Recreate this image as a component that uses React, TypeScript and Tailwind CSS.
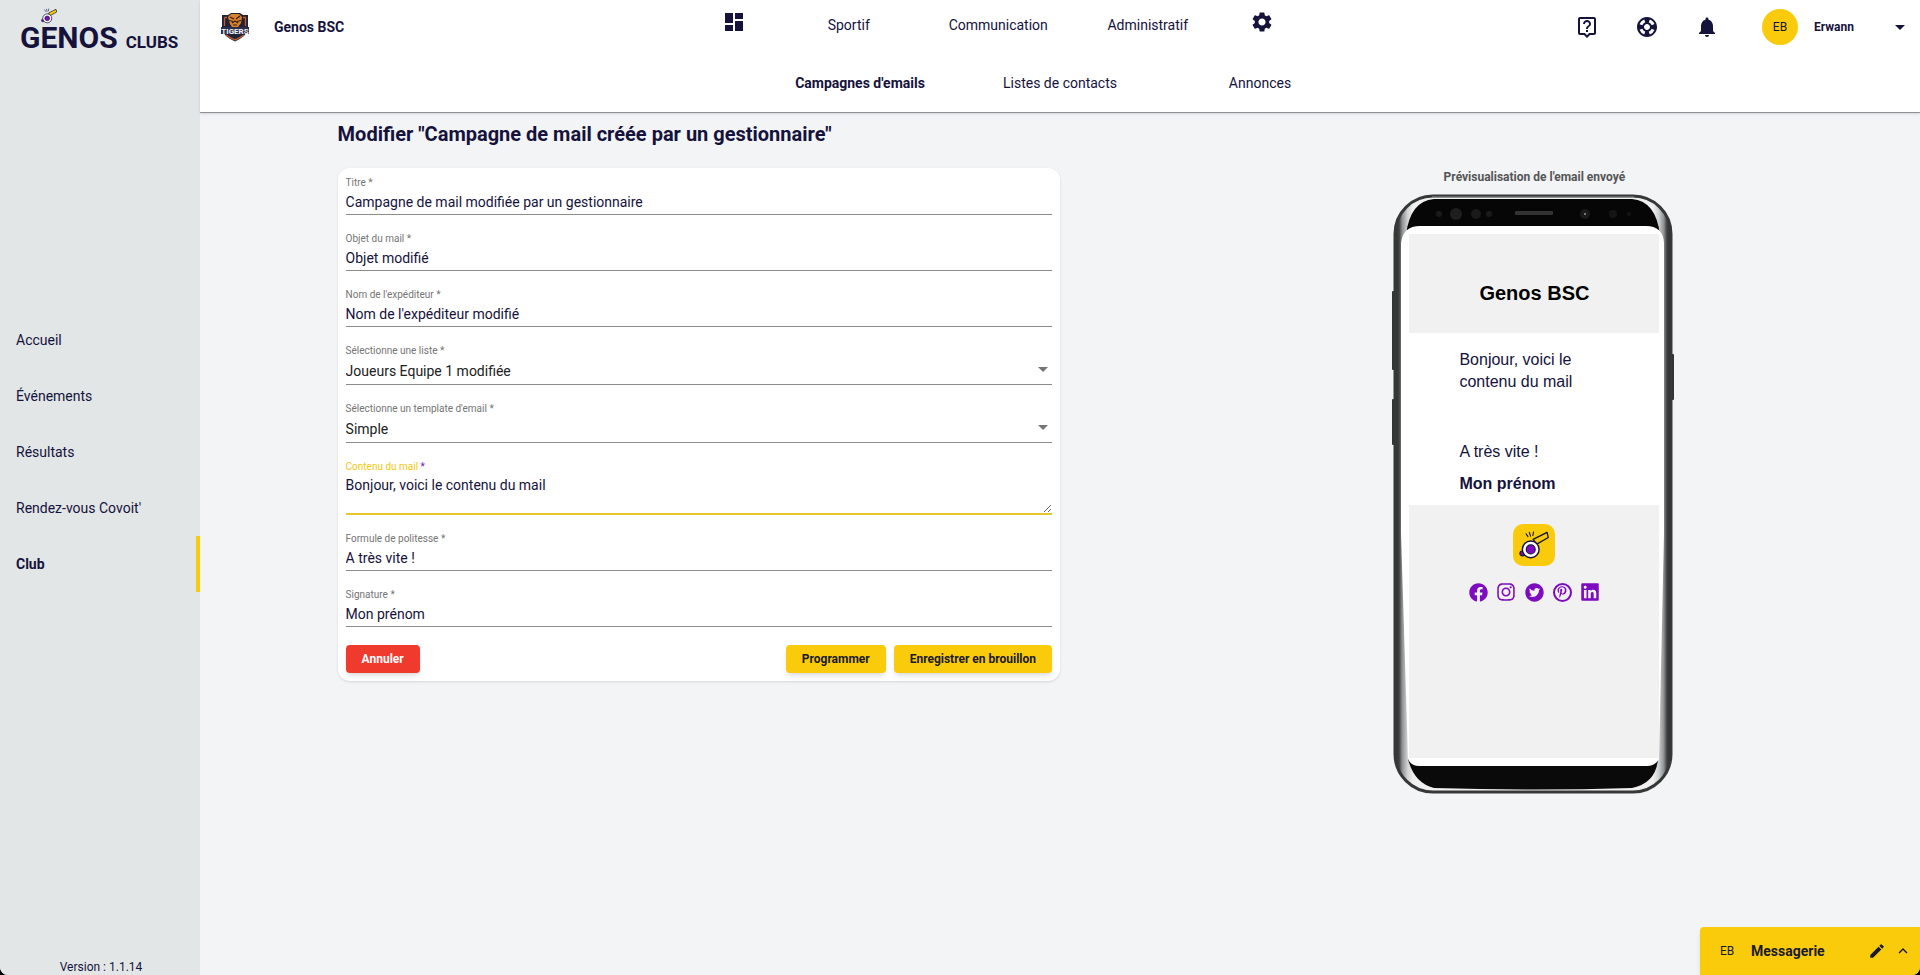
import React from "react";
import { AiFillTwitterCircle } from "react-icons/ai";
import { FaFacebook, FaInstagram, FaLinkedin, FaPinterestP } from "react-icons/fa";
import {
  MdArrowDropDown,
  MdDashboard,
  MdEdit,
  MdExpandLess,
  MdNotifications,
  MdOutlineLiveHelp,
  MdOutlineSupport,
  MdSettings,
} from "react-icons/md";

const sideLinks = ["Accueil", "Événements", "Résultats", "Rendez-vous Covoit'", "Club"];
const sectionLinks = ["Sportif", "Communication", "Administratif"];
const subLinks = ["Campagnes d'emails", "Listes de contacts", "Annonces"];

const Whistle = ({ className }: { className?: string }) => (
  <svg viewBox="0 0 32 30" className={className} aria-hidden="true">
    <path d="M15 9 L30 1.500 L31.300 7 L19 14 Z" fill="#f9cb0a" stroke="#15123b" strokeWidth="1.400" strokeLinejoin="round" />
    <path d="M7.500 3 L9.500 6 M11 1.500 L12.300 5.500 M15.500 1 L14.800 4.800" stroke="#15123b" strokeWidth="1.200" strokeLinecap="round" />
    <circle cx="3.500" cy="24" r="2.600" fill="#7d0bc0" stroke="#15123b" strokeWidth="1.200" />
    <circle cx="12.500" cy="19.700" r="9" fill="#fff" stroke="#15123b" strokeWidth="1.500" />
    <circle cx="12.500" cy="19.700" r="4.800" fill="#7d0bc0" stroke="#15123b" strokeWidth="1.200" />
  </svg>
);

const TeamCrest = () => (
  <svg viewBox="0 0 30 30" className="size-[30px]" role="img" aria-label="Tigers">
    <path d="M2 3 H8 L11 1 H20 L23 3 H28 V17 Q27 24 15 29.500 Q3 24 2 17 Z" fill="#1d2438" />
    <path d="M4.500 5.500 H7 M23 5.500 H25.500 V14 M4.500 5.500 V14 M6 23 Q9 25.500 15 27.800 Q21 25.500 24 23" fill="none" stroke="#c65a2c" strokeWidth="1.300" />
    <path d="M8 5 L11 2 L19 2 L22 5 L21 11 L18 15 H12 L10 12 Z" fill="#d9822b" />
    <path d="M10 5 L14 7 M20 4 L16 7 M9 8.500 L13 9.500 M21 8.500 L17 9.500 M13 13 H17 M12 11 L15 9 L18 11" fill="none" stroke="#3a2118" strokeWidth="1.200" />
    <rect x="1" y="15" width="28" height="7" fill="#2a3048" />
    <text x="15" y="21.500" textAnchor="middle" fontSize="8" fontWeight="700" fill="#f1f1f5" className="font-['Roboto',sans-serif]">
      TIGERS
    </text>
  </svg>
);

const Sidebar = () => (
  <aside className="flex w-[200px] shrink-0 flex-col bg-[#e2e6e7]">
    <a href="#" className="flex h-14 flex-col px-5 pt-2" aria-label="Genos Clubs">
      <Whistle className="ml-[21px] h-4 w-4 shrink-0" />
      <span className="flex items-baseline gap-2 leading-7 font-bold text-[#15123b]">
        <span className="text-[30px]">GENOS</span>
        <span className="text-[17px]">CLUBS</span>
      </span>
    </a>
    <nav className="mt-64 flex flex-col">
      {sideLinks.map((label) => (
        <a
          key={label}
          href="#"
          className={
            label === "Club"
              ? "flex h-14 items-center border-r-4 border-[#f9cb0a] pl-4 font-bold"
              : "flex h-14 items-center pl-4"
          }
        >
          {label}
        </a>
      ))}
    </nav>
    <p className="mt-auto pl-0.5 text-center text-xs">Version : 1.1.14</p>
  </aside>
);

const Header = () => (
  <header className="border-b border-[#8f9196] bg-white shadow-sm">
    <div className="grid h-[54px] grid-cols-[4fr_608px_5fr]">
      <div className="flex items-center gap-6 pl-5">
        <TeamCrest />
        <span className="font-bold">Genos BSC</span>
      </div>
      <nav className="flex">
        <a href="#" aria-label="Tableau de bord" className="flex h-11 w-20 items-center justify-center">
          <MdDashboard className="size-6" />
        </a>
        {sectionLinks.map((label) => (
          <a key={label} href="#" className="flex h-[50px] w-[150px] items-center justify-center">
            {label}
          </a>
        ))}
        <a href="#" aria-label="Paramètres" className="flex h-11 w-20 items-center justify-center">
          <MdSettings className="size-6" />
        </a>
      </nav>
      <div className="flex items-center justify-end pr-2">
        <div className="mr-[43px] flex gap-9">
          <button type="button" aria-label="Aide">
            <MdOutlineLiveHelp className="size-6" />
          </button>
          <button type="button" aria-label="Support">
            <MdOutlineSupport className="size-6" />
          </button>
          <button type="button" aria-label="Notifications">
            <MdNotifications className="size-6" />
          </button>
        </div>
        <span className="mr-4 flex size-9 items-center justify-center rounded-full bg-[#f9cb0a] text-xs">EB</span>
        <button type="button" className="flex w-[98px] items-center justify-between text-xs font-bold">
          Erwann
          <MdArrowDropDown className="size-6" />
        </button>
      </div>
    </div>
    <nav className="flex h-[58px] items-center justify-center">
      {subLinks.map((label) => (
        <a
          key={label}
          href="#"
          className={label === "Campagnes d'emails" ? "w-[200px] text-center font-bold" : "w-[200px] text-center"}
        >
          {label}
        </a>
      ))}
    </nav>
  </header>
);

type FieldProps = { id: string; label: string; value: string };

const labelClass = "block text-[10px] leading-4 text-[#757575]";

const TextField = ({ id, label, value }: FieldProps) => (
  <div className="border-b border-[#8c8c8c] pb-0.5">
    <label htmlFor={id} className={labelClass}>
      {label} *
    </label>
    <input id={id} type="text" required defaultValue={value} className="block h-[21px] w-full outline-none" />
  </div>
);

const SelectField = ({ id, label, value }: FieldProps) => (
  <div className="border-b border-[#8c8c8c] pb-0.5">
    <label htmlFor={id} className={labelClass}>
      {label} *
    </label>
    <div className="relative text-[#212121]">
      <select id={id} required defaultValue={value} className="block h-[23px] w-full appearance-none outline-none">
        <option>{value}</option>
      </select>
      <svg viewBox="0 0 10 5" className="pointer-events-none absolute top-2 right-1 h-[5px] w-2.5 fill-[#757575]" aria-hidden="true">
        <path d="M0 0 H10 L5 5 Z" />
      </svg>
    </div>
  </div>
);

const CampaignForm = () => (
  <form className="flex w-1/2 flex-col gap-4 rounded-xl bg-white px-2 pt-[7px] pb-2 shadow-sm">
    <TextField id="titre" label="Titre" value="Campagne de mail modifiée par un gestionnaire" />
    <TextField id="objet" label="Objet du mail" value="Objet modifié" />
    <TextField id="expediteur" label="Nom de l'expéditeur" value="Nom de l'expéditeur modifié" />
    <SelectField id="liste" label="Sélectionne une liste" value="Joueurs Equipe 1 modifiée" />
    <SelectField id="template" label="Sélectionne un template d'email" value="Simple" />
    <div className="border-b-2 border-[#e6c62f]">
      <label htmlFor="contenu" className="block text-[10px] leading-4 text-[#f2c80f]">
        Contenu du mail <span className="text-[#7d0bc0]">*</span>
      </label>
      <textarea
        id="contenu"
        required
        defaultValue="Bonjour, voici le contenu du mail"
        className="block h-[38px] w-full resize-y outline-none"
      />
    </div>
    <TextField id="politesse" label="Formule de politesse" value="A très vite !" />
    <TextField id="signature" label="Signature" value="Mon prénom" />
    <div className="mt-0.5 flex gap-2 text-xs font-bold">
      <button type="button" className="mr-auto h-7 rounded bg-[#ef3a2d] px-4 text-white shadow-md">
        Annuler
      </button>
      <button type="button" className="h-7 rounded bg-[#f9cb0a] px-4 text-[#1a1a2e] shadow-md">
        Programmer
      </button>
      <button type="submit" className="h-7 rounded bg-[#f9cb0a] px-4 text-[#1a1a2e] shadow-md">
        Enregistrer en brouillon
      </button>
    </div>
  </form>
);

const PhoneFrame = () => (
  <svg viewBox="0 0 284 602" className="absolute inset-0 h-full w-full" aria-hidden="true">
    <defs>
      <linearGradient id="edge" x1="0" x2="1" y1="0" y2="0">
        <stop offset="0" stopColor="#2b2c2c" />
        <stop offset="0.015" stopColor="#3f4141" />
        <stop offset="0.026" stopColor="#8e9091" />
        <stop offset="0.045" stopColor="#cfd1d2" />
        <stop offset="0.065" stopColor="#f0f0f0" />
        <stop offset="0.935" stopColor="#f0f0f0" />
        <stop offset="0.955" stopColor="#cfd1d2" />
        <stop offset="0.974" stopColor="#8e9091" />
        <stop offset="0.985" stopColor="#3f4141" />
        <stop offset="1" stopColor="#2b2c2c" />
      </linearGradient>
    </defs>
    <rect x="0" y="98" width="4" height="79" rx="1" fill="#333" />
    <rect x="0" y="206" width="4" height="46" rx="1" fill="#333" />
    <rect x="278" y="161" width="4" height="46" rx="1" fill="#333" />
    <rect x="3" y="3" width="276" height="596" rx="38" fill="url(#edge)" stroke="#363838" strokeWidth="3" />
    <path d="M40 4 H242" stroke="#8b8d8e" strokeWidth="1" />
    <path d="M42 6 H240 Q264 8 268 42 H14 Q18 8 42 6 Z" fill="#060606" />
    <path d="M16 566 H266 Q264 590 240 595 Q141 598 42 595 Q22 590 16 566 Z" fill="#0a0a0a" />
    <path d="M9 50 Q11 33 28 33 H254 Q271 33 272 50 V340 L267 566 Q263 573 255 573 H27 Q19 573 16 566 L9 340 Z" fill="#fff" />
    <rect x="123" y="18" width="38" height="4" rx="1" fill="#333" />
    <circle cx="47" cy="21" r="3" fill="#1a1a1a" />
    <circle cx="64" cy="21" r="6" fill="#1f1f1f" />
    <circle cx="84" cy="21" r="5" fill="#1a1a1a" />
    <circle cx="97" cy="21" r="3" fill="#1a1a1a" />
    <circle cx="193" cy="21" r="5" fill="#1a1a1a" />
    <circle cx="193" cy="21" r="1" fill="#999" />
    <circle cx="221" cy="21" r="4" fill="#151515" />
    <circle cx="237" cy="21" r="2" fill="#151515" />
  </svg>
);

const EmailPreview = () => (
  <section className="flex w-[496px] flex-col items-center">
    <h2 className="text-xs leading-[18px] font-bold text-[#555]">Prévisualisation de l'email envoyé</h2>
    <div className="relative mt-[7px] h-[602px] w-[284px] px-[17px] pt-[41px]">
      <PhoneFrame />
      <article className="relative flex h-[524px] flex-col font-['Liberation_Sans',Arial,sans-serif] text-base">
        <div className="flex h-[99px] items-center justify-center bg-[#f1f1f1] pt-[18px] text-xl font-bold text-black">
          Genos BSC
        </div>
        <div className="px-[50px] pt-4 leading-[22px]">
          <p>Bonjour, voici le contenu du mail</p>
          <p className="mt-12">A très vite !</p>
          <p className="mt-2.5 font-bold">Mon prénom</p>
        </div>
        <div className="mt-2.5 flex flex-1 flex-col items-center bg-[#f1f1f1] pt-[19px]">
          <div className="flex size-[42px] items-center justify-center rounded-[10px] bg-[#f9cb0a]">
            <Whistle className="h-7 w-[30px]" />
          </div>
          <div className="mt-4 flex gap-2 text-[#7d0bc0]">
            <a href="#" aria-label="Facebook" className="flex size-5 items-center justify-center">
              <FaFacebook className="size-[19px]" />
            </a>
            <a href="#" aria-label="Instagram" className="flex size-5 items-center justify-center">
              <FaInstagram className="size-5" />
            </a>
            <a href="#" aria-label="Twitter" className="flex size-5 items-center justify-center">
              <AiFillTwitterCircle className="size-[21px] shrink-0" />
            </a>
            <a href="#" aria-label="Pinterest" className="flex size-5 items-center justify-center">
              <span className="flex size-[19px] items-center justify-center rounded-full border-2 border-[#7d0bc0]">
                <FaPinterestP className="size-3" />
              </span>
            </a>
            <a href="#" aria-label="LinkedIn" className="flex size-5 items-center justify-center">
              <FaLinkedin className="size-5" />
            </a>
          </div>
        </div>
      </article>
    </div>
  </section>
);

const MessagingBar = () => (
  <div className="absolute right-0 bottom-0 flex h-12 w-[220px] items-center rounded-tl bg-[#f9cb0a] pr-2 pl-5 text-[#1a1a2e] shadow-md">
    <span className="w-[31px] text-xs">EB</span>
    <span className="mr-auto font-bold">Messagerie</span>
    <button type="button" aria-label="Nouveau message" className="mr-2">
      <MdEdit className="size-[18px]" />
    </button>
    <button type="button" aria-label="Ouvrir la messagerie">
      <MdExpandLess className="size-[18px]" />
    </button>
  </div>
);

const App = () => {
  return (
    <div className="min-h-screen bg-black font-['Roboto',sans-serif] text-sm text-[#15123b]">
      <div className="relative flex min-h-screen overflow-hidden rounded-b-lg bg-[#f2f4f6]">
        <Sidebar />
        <div className="min-w-0 flex-1">
          <Header />
          <main className="px-[8%] pt-[7px]">
            <h1 className="text-xl leading-7 font-bold">Modifier "Campagne de mail créée par un gestionnaire"</h1>
            <div className="mt-5 flex items-start justify-between">
              <CampaignForm />
              <EmailPreview />
            </div>
          </main>
        </div>
        <MessagingBar />
      </div>
    </div>
  );
};

export default App;
